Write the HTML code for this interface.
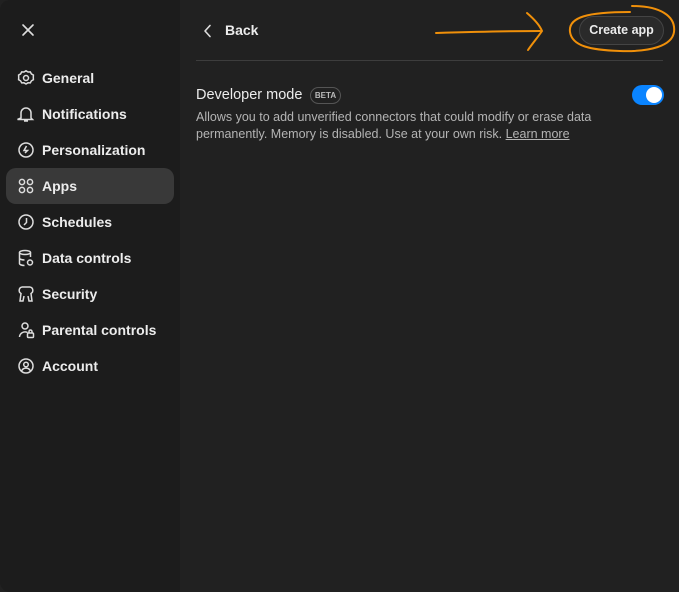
<!DOCTYPE html>
<html><head><style>
*{margin:0;padding:0;box-sizing:border-box}
body{width:679px;height:592px;background:#212121;font-family:"Liberation Sans",sans-serif;color:#ececec;position:relative;overflow:hidden}
.side{position:absolute;left:0;top:0;width:180px;height:592px;background:#1c1c1c;border-radius:10px 0 0 10px}
.item{position:absolute;left:6px;width:168px;height:36px;border-radius:10px;display:flex;align-items:center;font-size:14px;font-weight:bold;color:#ececec}
.item svg{position:absolute;left:11px;top:9px;width:18px;height:18px}
.item span{position:absolute;left:36px;top:10px}
.sel{background:#393939}
.main{position:absolute;left:180px;top:0;right:0;bottom:0}
</style></head><body>
<div class="side">
<svg style="position:absolute;left:21px;top:23px" width="14" height="14" viewBox="0 0 14 14" stroke="#ddd" stroke-width="1.6" stroke-linecap="round"><path d="M2 2L12 12M12 2L2 12"/></svg>
<div class="item" style="top:60px"><svg viewBox="0 0 18 18" fill="none" stroke="#ddd" stroke-width="1.5"><path d="M9 1.8l2 1.2 2.3-.1 1.1 2 2 1.2-.1 2.3.1 2.3-2 1.2-1.1 2-2.3-.1-2 1.2-2-1.2-2.3.1-1.1-2-2-1.2.1-2.3-.1-2.3 2-1.2 1.1-2 2.3.1z"/><circle cx="9" cy="9" r="2.5"/></svg><span>General</span></div>
<div class="item" style="top:96px"><svg viewBox="0 0 18 18" fill="none" stroke="#ddd" stroke-width="1.5"><path d="M4 13V8a5 5 0 0110 0v5l1.5 1.5h-15z M7 16h4"/></svg><span>Notifications</span></div>
<div class="item" style="top:132px"><svg viewBox="0 0 18 18" fill="none" stroke="#ddd" stroke-width="1.5"><circle cx="9" cy="9" r="7"/><path d="M9.5 5L7 9.5h3.5L8 12"/></svg><span>Personalization</span></div>
<div class="item sel" style="top:168px"><svg viewBox="0 0 18 18" fill="none" stroke="#ddd" stroke-width="1.5"><circle cx="5" cy="5" r="2.6"/><circle cx="13" cy="5" r="2.6"/><circle cx="5" cy="13" r="2.6"/><circle cx="13" cy="13" r="2.6"/></svg><span>Apps</span></div>
<div class="item" style="top:204px"><svg viewBox="0 0 18 18" fill="none" stroke="#ddd" stroke-width="1.5"><circle cx="9" cy="9" r="7"/><path d="M9.5 5v4.5L7 12"/></svg><span>Schedules</span></div>
<div class="item" style="top:240px"><svg viewBox="0 0 18 18" fill="none" stroke="#ddd" stroke-width="1.5"><ellipse cx="8" cy="3.5" rx="5.5" ry="2"/><path d="M2.5 3.5v11c0 1 2 2 5 2M13.5 3.5V8M2.5 9c0 1 2 2 5 2"/><circle cx="13" cy="13.5" r="2.5"/></svg><span>Data controls</span></div>
<div class="item" style="top:276px"><svg viewBox="0 0 18 18" fill="none" stroke="#ddd" stroke-width="1.5"><path d="M5 2a3.5 3.5 0 00-1 6.5L3 16h3l1-5M13 2a3.5 3.5 0 011 6.5L15 16h-3l-1-5M5 2h8"/></svg><span>Security</span></div>
<div class="item" style="top:312px"><svg viewBox="0 0 18 18" fill="none" stroke="#ddd" stroke-width="1.5"><circle cx="8" cy="5" r="3"/><path d="M2.5 16a5.5 5.5 0 018-4.5"/><rect x="10.5" y="12" width="6" height="4.5" rx="1"/><path d="M12 12v-1.5a1.5 1.5 0 013 0V12"/></svg><span>Parental controls</span></div>
<div class="item" style="top:348px"><svg viewBox="0 0 18 18" fill="none" stroke="#ddd" stroke-width="1.5"><circle cx="9" cy="9" r="7"/><circle cx="9" cy="7.5" r="2.3"/><path d="M4.5 14a5 5 0 019 0"/></svg><span>Account</span></div>
</div>
<div class="main">
<svg style="position:absolute;left:23px;top:24px" width="10" height="14" viewBox="0 0 10 14" fill="none" stroke="#ddd" stroke-width="1.6" stroke-linecap="round" stroke-linejoin="round"><path d="M7 1.5L2 7l5 5.5"/></svg>
<div style="position:absolute;left:45px;top:22px;font-size:14px;font-weight:bold">Back</div>
<div style="position:absolute;left:399px;top:16px;width:85px;height:29px;border:1px solid #444;border-radius:15px;background:#2a2a2a;font-size:12.5px;font-weight:bold;text-align:center;line-height:27px">Create app</div>
<div style="position:absolute;left:16px;right:16px;top:60px;height:1px;background:#3d3d3d"></div>
<div style="position:absolute;left:16px;top:87px;font-size:14.5px">Developer mode</div>
<div style="position:absolute;left:130px;top:87px;width:31px;height:17px;border:1px solid #555;border-radius:9px;font-size:8px;font-weight:bold;color:#bbb;text-align:center;line-height:15px">BETA</div>
<div style="position:absolute;left:452px;top:85px;width:32px;height:20px;border-radius:10px;background:#0a84ff"><div style="position:absolute;right:2px;top:2px;width:16px;height:16px;border-radius:50%;background:#fff"></div></div>
<div style="position:absolute;left:16px;top:109px;width:420px;font-size:12.5px;line-height:16.5px;color:#b4b4b4">Allows you to add unverified connectors that could modify or erase data permanently. Memory is disabled. Use at your own risk. <u>Learn more</u></div>
</div>
<svg style="position:absolute;left:0;top:0" width="679" height="80" fill="none" stroke="#f0900a" stroke-width="2" stroke-linecap="round">
<path d="M436 33C470 32 510 31 540 31"/>
<path d="M527 13C534 19 540 26 542 31C538 37 532 44 528 50"/>
<path d="M632 6C660 6 676 16 674 32C672 46 650 52 620 51C590 50 572 46 570 32C568 17 588 12 630 12"/>
</svg>
</body></html>
